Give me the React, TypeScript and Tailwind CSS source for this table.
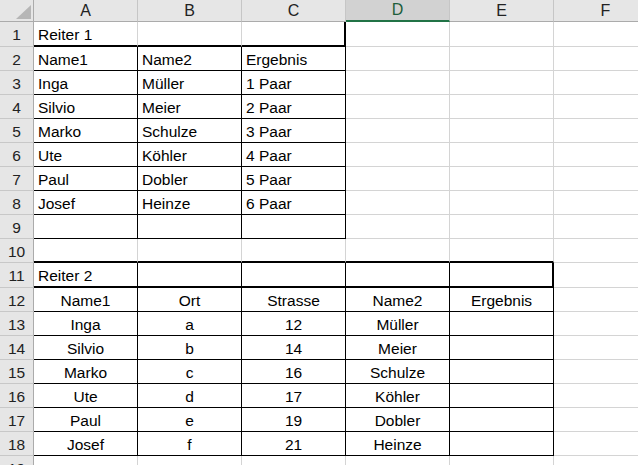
type Line = 'grid' | 'thin' | 'thick'
type Cell = { text?: string; center?: boolean; r: Line; b: Line }

const COLS = ['A', 'B', 'C', 'D', 'E', 'F']

const rightCls: Record<Line, string> = {
  grid: 'border-r border-r-[#d4d4d4]',
  thin: 'border-r border-r-black',
  thick: 'border-r-2 border-r-black',
}
const bottomCls: Record<Line, string> = {
  grid: 'border-b border-b-[#d4d4d4]',
  thin: 'border-b border-b-black',
  thick: 'border-b-2 border-b-black',
}

const table1: string[][] = [
  ['Name1', 'Name2', 'Ergebnis'],
  ['Inga', 'Müller', '1 Paar'],
  ['Silvio', 'Meier', '2 Paar'],
  ['Marko', 'Schulze', '3 Paar'],
  ['Ute', 'Köhler', '4 Paar'],
  ['Paul', 'Dobler', '5 Paar'],
  ['Josef', 'Heinze', '6 Paar'],
  ['', '', ''],
]

const table2: string[][] = [
  ['Name1', 'Ort', 'Strasse', 'Name2', 'Ergebnis'],
  ['Inga', 'a', '12', 'Müller', ''],
  ['Silvio', 'b', '14', 'Meier', ''],
  ['Marko', 'c', '16', 'Schulze', ''],
  ['Ute', 'd', '17', 'Köhler', ''],
  ['Paul', 'e', '19', 'Dobler', ''],
  ['Josef', 'f', '21', 'Heinze', ''],
]

function buildRows(): Cell[][] {
  const rows: Cell[][] = []
  for (let n = 1; n <= 19; n++) {
    const row: Cell[] = COLS.map(() => ({ r: 'grid', b: 'grid' }))
    if (n === 1) {
      row[0] = { text: 'Reiter 1', r: 'grid', b: 'thick' }
      row[1] = { r: 'grid', b: 'thick' }
      row[2] = { r: 'thick', b: 'thick' }
    } else if (n >= 2 && n <= 9) {
      const vals = table1[n - 2]
      for (let c = 0; c < 3; c++) row[c] = { text: vals[c], r: 'thin', b: 'thin' }
    } else if (n === 10) {
      for (let c = 0; c < 5; c++) row[c] = { r: 'grid', b: 'thick' }
    } else if (n === 11) {
      for (let c = 0; c < 5; c++) row[c] = { r: c === 4 ? 'thick' : 'thin', b: 'thick' }
      row[0].text = 'Reiter 2'
    } else if (n >= 12 && n <= 18) {
      const vals = table2[n - 12]
      for (let c = 0; c < 5; c++) row[c] = { text: vals[c], center: true, r: 'thin', b: 'thin' }
    }
    rows.push(row)
  }
  return rows
}

function rowHeight(n: number) {
  return n === 1 || n === 11 ? 'h-[25px]' : 'h-[24px]'
}

export default function App() {
  const rows = buildRows()
  return (
    <div
      className="w-[638px] h-[465px] overflow-hidden bg-white text-black text-[15.5px] leading-none"
      style={{ fontFamily: '"Liberation Sans", Arial, sans-serif' }}
    >
      <div className="w-[658px]">
        {/* column headers */}
        <div className="flex h-[22px]">
          <div className="w-[34px] shrink-0 bg-[#e6e6e6] border-r border-r-[#ababab] border-b border-b-[#ababab] relative">
            <svg className="absolute left-0 top-0" width="33" height="21" viewBox="0 0 33 21">
              <polygon points="31,5 31,19 16,19" fill="#b6b6b6" />
            </svg>
          </div>
          {COLS.map((c) =>
            c === 'D' ? (
              <div
                key={c}
                className="w-[104px] shrink-0 flex items-center justify-center bg-[#d2d2d2] border-r border-r-[#c6c6c6] border-b-2 border-b-[#217346] text-[#1d5e3a] text-[16px]"
              >
                {c}
              </div>
            ) : (
              <div
                key={c}
                className="w-[104px] shrink-0 flex items-center justify-center bg-[#e6e6e6] border-r border-r-[#c6c6c6] border-b border-b-[#ababab] text-[#222] text-[16px]"
              >
                {c}
              </div>
            ),
          )}
        </div>

        {rows.map((row, i) => {
          const n = i + 1
          return (
            <div key={n} className={`flex ${rowHeight(n)}`}>
              <div className="w-[34px] shrink-0 flex items-center justify-center pt-[2px] bg-[#e6e6e6] border-r border-r-[#ababab] border-b border-b-[#c8c8c8] text-[#222]">
                {n}
              </div>
              {row.map((cell, c) => (
                <div
                  key={c}
                  className={`w-[104px] shrink-0 flex items-center pt-[2px] whitespace-nowrap ${rightCls[cell.r]} ${bottomCls[cell.b]} ${
                    cell.center ? 'justify-center' : 'pl-[4px]'
                  }`}
                >
                  {cell.text}
                </div>
              ))}
            </div>
          )
        })}
      </div>
    </div>
  )
}
